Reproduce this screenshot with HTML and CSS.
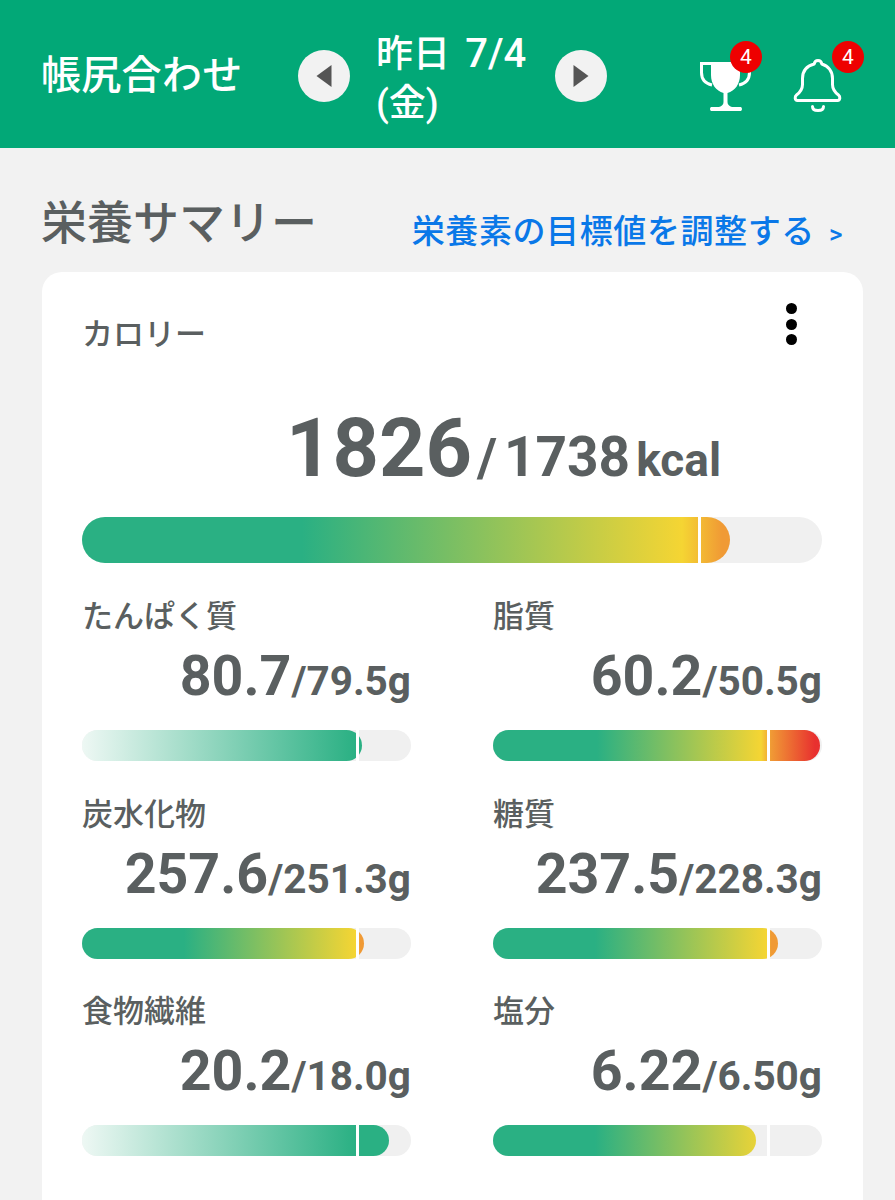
FILE: index.html
```html
<!DOCTYPE html>
<html lang="ja">
<head>
<meta charset="utf-8">
<title>帳尻合わせ</title>
<link rel="stylesheet" href="styles.css">
</head>
<body>
<header class="app-header">
  <h1 class="app-title">帳尻合わせ</h1>
  <nav class="date-nav">
    <button class="nav-btn" aria-label="前の日"><svg width="16" height="22" viewBox="0 0 16 22"><path d="M15.500 0v22L.5 11z" fill="#555"/></svg></button>
    <div class="date-text">昨日 <span class="date-num">7/4</span> (金)</div>
    <button class="nav-btn" aria-label="次の日"><svg width="16" height="22" viewBox="0 0 16 22"><path d="M.5 0v22l15-11z" fill="#555"/></svg></button>
  </nav>
  <div class="header-icons">
    <div class="icon-wrap trophy">
      <svg class="icon" width="52" height="52" viewBox="0 0 52 52"><path d="M11 3.500H1.500v9c0 7 4 11 10.500 12.500M40 3.500h9.500v9c0 7-4 11-10.500 12.500" fill="none" stroke="#fff" stroke-width="3"/><path d="M11 2h29v13c0 9-5 16-12.500 18v9c0 2.500 1.500 4 4.500 5h8.700c.8 0 1.300 1.500 1.300 2s-.5 2-1.300 2H11.300c-.8 0-1.300-1.500-1.300-2s.5-2 1.300-2H19c3-1 4.500-2.500 4.500-5v-9C16 31 11 24 11 15z" fill="#fff"/></svg>
      <span class="badge">4</span>
    </div>
    <div class="icon-wrap bell">
      <svg class="icon" width="52" height="52" viewBox="0 0 52 52"><path d="M25 .5c2.200 0 3.500 1.500 3.800 3.500C35.500 6 39.500 11.500 39.500 18.500v6c0 4 2 7.500 6 10.500 1.800 1.300 2 5.500-1 5.500H4.500c-3 0-2.800-4.200-1-5.500 4-3 6-6.500 6-10.500v-6C9.500 11.500 13.500 6 21.200 4c.3-2 1.600-3.500 3.800-3.500z" fill="none" stroke="#fff" stroke-width="3" stroke-linejoin="round"/><path d="M19.500 46.500c0 3 2.500 4 5.500 4s5.500-1 5.500-4" fill="none" stroke="#fff" stroke-width="3" stroke-linecap="round"/></svg>
      <span class="badge">4</span>
    </div>
  </div>
</header>
<main class="page">
  <div class="section-head">
    <h2 class="section-title">栄養サマリー</h2>
    <a class="section-link" href="#">栄養素の目標値を調整する<span class="chev">&gt;</span></a>
  </div>
  <section class="card">
    <div class="card-head">
      <div class="label">カロリー</div>
      <div class="kebab"><i></i><i></i><i></i></div>
    </div>
    <div class="total">
      <span class="total-num">1826</span><span class="total-slash">/</span><span class="total-target">1738</span><span class="total-unit">kcal</span>
    </div>
    <div class="track track-lg">
      <div class="fill g-total" style="width:648px"></div>
      <span class="mark"></span>
    </div>
    <div class="grid">
      <div class="nutrient">
        <div class="label">たんぱく質</div>
        <div class="value"><span class="num">80.7</span><span class="target">/79.5g</span></div>
        <div class="track"><div class="fill g-low" style="width:280px"></div><span class="mark"></span></div>
      </div>
      <div class="nutrient">
        <div class="label">脂質</div>
        <div class="value"><span class="num">60.2</span><span class="target">/50.5g</span></div>
        <div class="track"><div class="fill g-high" style="width:327px"></div><span class="mark"></span></div>
      </div>
      <div class="nutrient">
        <div class="label">炭水化物</div>
        <div class="value"><span class="num">257.6</span><span class="target">/251.3g</span></div>
        <div class="track"><div class="fill g-warm" style="width:282px"></div><span class="mark"></span></div>
      </div>
      <div class="nutrient">
        <div class="label">糖質</div>
        <div class="value"><span class="num">237.5</span><span class="target">/228.3g</span></div>
        <div class="track"><div class="fill g-warm" style="width:285px"></div><span class="mark"></span></div>
      </div>
      <div class="nutrient">
        <div class="label">食物繊維</div>
        <div class="value"><span class="num">20.2</span><span class="target">/18.0g</span></div>
        <div class="track"><div class="fill g-low" style="width:307px"></div><span class="mark"></span></div>
      </div>
      <div class="nutrient">
        <div class="label">塩分</div>
        <div class="value"><span class="num">6.22</span><span class="target">/6.50g</span></div>
        <div class="track"><div class="fill g-warm" style="width:263px"></div><span class="mark"></span></div>
      </div>
    </div>
  </section>
</main>
</body>
</html>
```
FILE: styles.css
```css
* { box-sizing: border-box; }
html, body { margin: 0; height: 1200px; overflow: hidden; }
body {
  background: #f2f2f2;
  color: #5a5f60;
  font-family: Roboto, "Noto Sans CJK JP", sans-serif;
}
.app-header {
  height: 148px;
  background: #02a877;
  color: #fff;
  display: flex;
  align-items: center;
  padding: 4px 0 0 41px;
}
.app-title {
  margin: 0;
  width: 257px;
  font-size: 40px;
  font-weight: 500;
  letter-spacing: .3px;
  line-height: 48px;
}
.date-nav { display: flex; align-items: center; width: 309px; }
.nav-btn {
  width: 52px;
  height: 52px;
  flex: none;
  padding: 0;
  border: 0;
  border-radius: 50%;
  background: #f2f2f2;
  display: flex;
  align-items: center;
  justify-content: center;
}
.date-text {
  width: 205px;
  padding: 5px 25px 0 26px;
  font-size: 37px;
  font-weight: 500;
  line-height: 49px;
}
.date-num { margin-left: 6px; font-size: 40px; font-weight: 500; line-height: 49px; }
.header-icons { display: flex; margin: 20px 0 0 93px; gap: 41px; }
.icon-wrap { position: relative; width: 52px; height: 52px; }
.icon { display: block; overflow: visible; }
.badge {
  position: absolute;
  top: -19px;
  left: 30px;
  width: 32px;
  height: 32px;
  border-radius: 50%;
  background: #ee0000;
  color: #fff;
  font-size: 21px;
  line-height: 32px;
  text-align: center;
}
.bell .badge { left: 39px; }
.page { padding: 0 32px 0 42px; }
.section-head {
  height: 124px;
  display: flex;
  align-items: center;
  justify-content: space-between;
  padding-right: 20px;
}
.section-title { margin: 26px 0 0 -1px; font-size: 46px; font-weight: 500; line-height: 56px; }
.section-link {
  font-size: 33px;
  font-weight: 500;
  line-height: 44px;
  margin-top: 46px;
  color: #0a78e8;
  text-decoration: none;
  letter-spacing: .6px;
}
.chev { font-size: 26px; margin-left: 14px; }
.card {
  background: #fff;
  border-radius: 20px;
  padding: 40px 41px 80px 40px;
  min-height: 960px;
}
.card-head { display: flex; justify-content: space-between; }
.label { font-size: 31px; font-weight: 500; line-height: 46px; }
.kebab { display: flex; flex-direction: column; gap: 4.500px; margin: -9px 25.500px 0 0; }
.kebab i { width: 11px; height: 11px; border-radius: 50%; background: #000; }
.total {
  display: flex;
  align-items: baseline;
  padding-left: 204px;
  margin-top: 41px;
  height: 100px;
  font-weight: 700;
}
.total-num { font-size: 81px; line-height: 100px; }
.total-slash { font-size: 54px; margin: 0 7px 0 5px; }
.total-target { font-size: 55px; }
.total-unit { font-size: 46px; margin-left: 6px; }
.track {
  position: relative;
  height: 31px;
  border-radius: 16px;
  background: #f0f0f0;
  overflow: hidden;
}
.track-lg { height: 46px; border-radius: 23px; margin-top: 18px; }
.fill { height: 100%; border-radius: 0 16px 16px 0; }
.track-lg .fill { border-radius: 0 23px 23px 0; }
.mark {
  position: absolute;
  top: 0;
  bottom: 0;
  left: 83.3%;
  width: 3px;
  background: #fff;
}
.g-total { background: linear-gradient(90deg, #2ab083 220px, #f5d533 600px, #f09a35 640px); }
.g-low { background: linear-gradient(90deg, #eef8f4 0, #2ab083 274px); }
.g-warm { background: linear-gradient(90deg, #2ab083 102px, #f5d533 274px, #f09a35 278px); }
.g-high { background: linear-gradient(90deg, #2ab083 104px, #f5d533 268px, #f09a35 278px, #e8302f 322px); }
.grid {
  display: grid;
  grid-template-columns: 329px 329px;
  column-gap: 82px;
  margin-top: 31px;
  row-gap: 30.500px;
}
.value {
  display: flex;
  justify-content: flex-end;
  align-items: baseline;
  height: 72px;
  margin: 1px 0 17px;
  font-weight: 700;
}
.num { font-size: 55.500px; line-height: 72px; }
.target { font-size: 40.500px; }
```
